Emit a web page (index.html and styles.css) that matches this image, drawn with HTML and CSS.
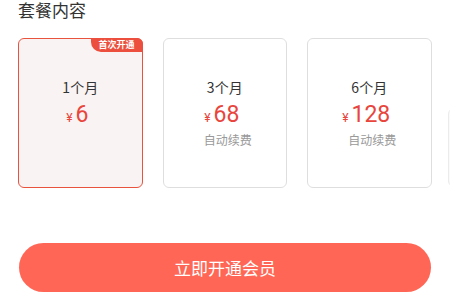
FILE: index.html
```html
<!DOCTYPE html>
<html lang="zh">
<head>
<meta charset="utf-8">
<link rel="stylesheet" href="styles.css">
</head>
<body>
<div class="page">
  <h2 class="title">套餐内容</h2>
  <div class="plans">
    <div class="plan active">
      <span class="badge">首次开通</span>
      <div class="months">1个月</div>
      <div class="price"><span class="yen">¥</span><span class="num">6</span></div>
    </div>
    <div class="plan">
      <div class="months">3个月</div>
      <div class="price"><span class="yen">¥</span><span class="num">68</span></div>
      <div class="sub">自动续费</div>
    </div>
    <div class="plan">
      <div class="months">6个月</div>
      <div class="price"><span class="yen">¥</span><span class="num">128</span></div>
      <div class="sub">自动续费</div>
    </div>
    <div class="plan ghost"></div>
  </div>
  <button class="cta">立即开通会员</button>
</div>
</body>
</html>
```
FILE: styles.css
```css
* { box-sizing: border-box; }
html, body { margin: 0; padding: 0; background: #fff; }
body {
  width: 462px;
  height: 305px;
  overflow: hidden;
  font-family: "Noto Sans CJK SC", "Noto Sans", sans-serif;
}
.page {
  display: flex;
  flex-direction: column;
}
.title {
  margin: 0 0 0 18px;
  font-size: 17px;
  line-height: 19px;
  font-weight: 400;
  color: #333;
}
.plans {
  display: flex;
  gap: 20px;
  margin: 19px 0 0 18px;
  width: 432px;
  overflow: hidden;
  align-items: flex-start;
}
.plan {
  position: relative;
  flex: 0 0 124.5px;
  height: 150px;
  border: 1.5px solid #dedede;
  border-radius: 6px;
  background: #fff;
  display: flex;
  flex-direction: column;
  align-items: center;
  padding-top: 38px;
}
.plan.active {
  border-color: #e8533e;
  background: #faf3f3;
}
.plan.ghost {
  flex: 0 0 40px;
  height: 79px;
  margin-top: 70px;
  margin-left: -4px;
  border-color: #ebebeb;
  background: #fafafa;
}
.badge {
  position: absolute;
  top: -1px;
  right: -1px;
  width: 52px;
  height: 14px;
  background: #ec4f3d;
  color: #fff;
  font-size: 9px;
  line-height: 14px;
  font-weight: 700;
  text-align: center;
  border-radius: 0 6px 0 10px;
}
.months {
  font-size: 14px;
  line-height: 20px;
  color: #333;
}
.price {
  display: flex;
  align-items: baseline;
  margin-top: 4px;
  margin-left: -6px;
  color: #e8453c;
  font-family: Roboto, "Noto Sans CJK SC", sans-serif;
}
.yen {
  font-size: 12px;
  margin-right: 3px;
}
.num {
  font-size: 23px;
  line-height: 27px;
}
.sub {
  margin-top: 4px;
  margin-left: 6px;
  font-size: 12px;
  line-height: 16px;
  color: #999;
}
.cta {
  margin: 55px 0 0 19px;
  width: 412px;
  height: 49px;
  border: none;
  border-radius: 25px;
  background: #ff6655;
  color: #fff;
  font-family: "Noto Sans CJK SC", sans-serif;
  font-size: 17px;
  padding: 0;
}
```
